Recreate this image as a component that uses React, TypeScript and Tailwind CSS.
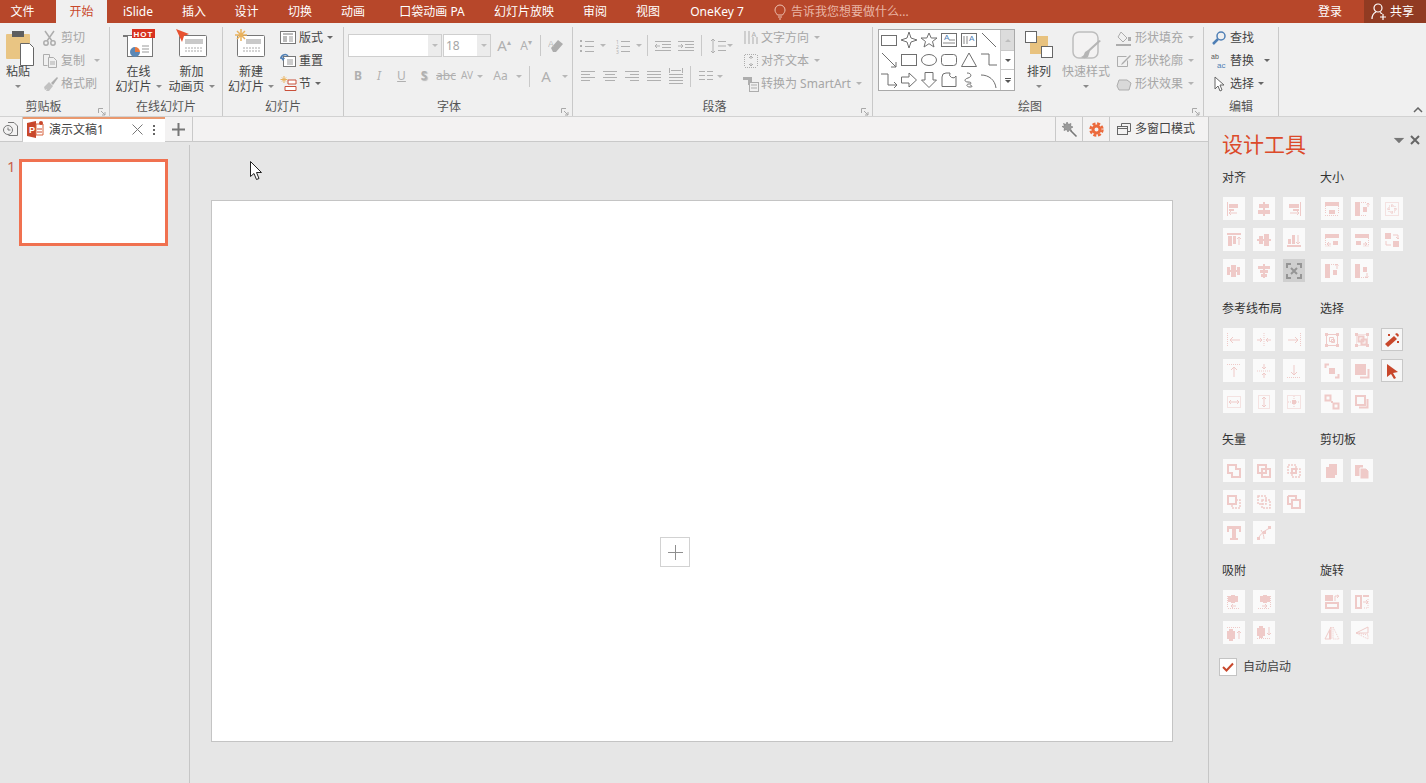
import React from "react";

const FONT = "font-['Noto_Sans','Noto_Sans_CJK_SC',sans-serif]";

const r = (x: number, y: number, w: number, h: number) => <rect x={x} y={y} width={w} height={h} fill="currentColor" />;
const l = (d: string) => <path d={d} fill="none" stroke="currentColor" strokeWidth="1" />;
const d = (p: string) => <path d={p} fill="none" stroke="currentColor" strokeWidth="1" strokeDasharray="1 1" />;
const th = (p: string) => <path d={p} fill="none" stroke="currentColor" strokeWidth="2" />;
const dt = (p: string) => <path d={p} fill="none" stroke="currentColor" strokeWidth="1.500" strokeDasharray="2 1" />;

const Caret = ({ className = "text-[#8a8a8a]" }: { className?: string }) => (
  <svg width="6" height="3" viewBox="0 0 6 3" className={`shrink-0 ${className}`}>
    <path d="M0 0h6L3 3z" fill="currentColor" />
  </svg>
);

const Launcher = () => (
  <svg width="8" height="8" viewBox="0 0 8 8" className="absolute right-[3px] bottom-0 text-[#a8a8a8]">
    <path d="M.5 5V.5H5M3 3l4 4M7 4v3H4" fill="none" stroke="currentColor" />
  </svg>
);

const Group = ({ className, label, labelClass = "", launcher, children }: { className: string; label: string; labelClass?: string; launcher?: boolean; children: React.ReactNode }) => (
  <div className={`relative flex flex-col shrink-0 border-r border-[#c9c9c9] ${className}`}>
    <div className="flex h-[70px]">{children}</div>
    <div className={`h-[15px] pt-[2px] text-center text-[12px] leading-[15px] text-[#555] ${labelClass}`}>{label}</div>
    {launcher && <Launcher />}
  </div>
);

const Big = ({ className, icon, line1, line2, caret, gray }: { className: string; icon: React.ReactNode; line1: string; line2?: string; caret?: boolean; gray?: boolean }) => (
  <div className={`flex flex-col items-center shrink-0 text-[12px] leading-[15px] ${gray ? "text-[#a6a6a6]" : "text-[#444]"} ${className}`}>
    <div className="h-[37px] flex items-start justify-center">{icon}</div>
    <div>{line1}</div>
    <div className="flex items-center justify-center gap-[4px] h-[15px]">
      {line2}
      {caret && <Caret />}
    </div>
  </div>
);

const Small = ({ icon, text, caret, gray, w = "w-[19px]", cm }: { icon: React.ReactNode; text: string; caret?: boolean; gray?: boolean; w?: string; cm?: string }) => (
  <div className={`flex items-center h-[23px] text-[12px] ${gray ? "text-[#a6a6a6]" : "text-[#444]"}`}>
    <div className={`${w} shrink-0 flex items-center`}>{icon}</div>
    <span>{text}</span>
    {caret && <Caret className={`${cm ?? (gray ? "ml-[5px]" : "ml-[4px]")} ${gray ? "text-[#b4b4b4]" : "text-[#666]"}`} />}
  </div>
);

const Ic = ({ children, w = 16, h = 16, className = "text-[#adadad]" }: { children: React.ReactNode; w?: number; h?: number; className?: string }) => (
  <svg width={w} height={h} viewBox={`0 0 ${w} ${h}`} className={`shrink-0 ${className}`}>
    {children}
  </svg>
);

const Sep = ({ h = "h-[21px]", className = "" }: { h?: string; className?: string }) => <div className={`w-px shrink-0 bg-[#c9c9c9] ${h} ${className}`} />;

const PasteIcon = () => (
  <svg width="30" height="36" viewBox="0 0 30 36" className="mt-[3px] ml-[4px]">
    <rect x="1" y="4" width="24" height="25" rx="1" fill="#e9c583" />
    <rect x="7" y="1" width="12" height="6" fill="#5e5e5e" />
    <path d="M15.500 13.500h9l4 4v18h-13z" fill="#fff" stroke="#666" />
  </svg>
);

const OnlineIcon = () => (
  <svg width="32" height="30" viewBox="0 0 32 30" className="mt-[2px]">
    <rect x="0" y="6" width="9" height="2" fill="#777" />
    <rect x="4.500" y="6.500" width="25" height="21" fill="#fff" stroke="#777" />
    <path d="M12 18a5 5 0 1 0 5 5h-5z" fill="#5b87b5" />
    <path d="M12 18v5h5a5 5 0 0 0-5-5z" fill="#ea7a3f" />
    <path d="M19 17h7M19 20h7M19 23h7" stroke="#999" />
    <rect x="9" y="0" width="23" height="9" fill="#d8321f" />
    <text x="20.500" y="7.500" fill="#fff" textAnchor="middle" fontSize="8" fontWeight="700" letterSpacing="1" fontFamily="Liberation Sans">HOT</text>
  </svg>
);

const NewAnimIcon = () => (
  <svg width="32" height="30" viewBox="0 0 32 30" className="mt-[2px]">
    <rect x="3.500" y="6.500" width="27" height="21" rx="1" fill="#fff" stroke="#777" />
    <rect x="9" y="10" width="18" height="5" fill="#c9c9c9" />
    <path d="M9 19h18M9 22h18" stroke="#aaa" strokeDasharray="2 1" />
    <path d="M0 0l13 5-5 2-2 6z" fill="#e8512f" />
  </svg>
);

const NewSlideIcon = () => (
  <svg width="32" height="30" viewBox="0 0 32 30" className="mt-[2px]">
    <rect x="2.500" y="6.500" width="27" height="21" rx="1" fill="#fff" stroke="#777" />
    <rect x="11" y="10" width="15" height="5" fill="#c9c9c9" />
    <path d="M8 19h18M8 22h18" stroke="#aaa" strokeDasharray="2 1" />
    <path d="M6 0v12M0 6h12M2 2l8 8M10 2l-8 8" stroke="#eab25c" strokeWidth="1.500" />
  </svg>
);

const ShapeCell = ({ children }: { children: React.ReactNode }) => (
  <div className="w-[20px] h-[20px] flex items-center justify-center">
    <svg width="18" height="18" viewBox="0 0 18 18" fill="none" stroke="#6f6f6f">
      {children}
    </svg>
  </div>
);

const SHAPES = [
  <rect x="1.500" y="4.500" width="15" height="10" />,
  <path d="M9 1l2 6 6 2-6 2-2 6-2-6-6-2 6-2z" />,
  <path d="M9 2l2.200 5H17l-4.500 3.500L14 16l-5-3.300L4 16l1.500-5.500L1 7h5.800z" />,
  <>
    <rect x="1.500" y="2.500" width="15" height="13" />
    <path d="M9 9h6M3 12h12" stroke="#888" />
    <text x="4" y="9" fontSize="8" fill="#4f7fb5" stroke="none" fontFamily="Liberation Sans">A</text>
  </>,
  <>
    <rect x="1.500" y="2.500" width="15" height="13" />
    <path d="M4 5v8M7 5v8" stroke="#888" />
    <text x="9" y="10" fontSize="8" fill="#4f7fb5" stroke="none" fontFamily="Liberation Sans">A</text>
  </>,
  <path d="M2 2l14 14" />,
  <path d="M2 2l14 14M11 16h5v-5" />,
  <rect x="1.500" y="3.500" width="15" height="11" />,
  <ellipse cx="9" cy="9" rx="7.500" ry="5.500" />,
  <rect x="1.500" y="3.500" width="15" height="11" rx="3" />,
  <path d="M9 2l7.500 13.500h-15z" />,
  <path d="M1 3h8v11h8" />,
  <path d="M1 3h7v11h9M14 11l3 3-3 3" />,
  <path d="M1.500 6H9V2l7.500 7L9 16v-4H1.500z" />,
  <path d="M5 1.500h8V9h3.500L9 16.500 1.500 9H5z" />,
  <path d="M2 15.500V6a4 4 0 0 1 4-4h4a3 3 0 0 0 6 3v10.500z" />,
  <path d="M7 2c5 0 5 4 1 5s-4 4 0 4 4 2 1 2-3 3 1 3 1-2 0-2" />,
  <path d="M1 4c8 0 14 5 15 13" />,
];

const ClipboardGroup = () => (
  <Group className="w-[110px]" labelClass="pr-[22px]" label="剪贴板" launcher>
    <Big className="w-[36px] ml-0" icon={<PasteIcon />} line1="粘贴" line2="" caret />
    <div className="ml-[6px] mt-[-1px] flex flex-col">
      <Small gray text="剪切" icon={<Ic><path d="M3 1l7 10M12 1L5 11" fill="none" stroke="currentColor" strokeWidth="1.500" /><circle cx="4" cy="13" r="2.200" fill="none" stroke="currentColor" strokeWidth="1.500" /><circle cx="11" cy="13" r="2.200" fill="none" stroke="currentColor" strokeWidth="1.500" /></Ic>} />
      <Small gray text="复制" caret cm="ml-[9px]" icon={<Ic><path d="M1.500 1.500h6v3M1.500 1.500v11h4" fill="none" stroke="currentColor" /><path d="M6.500 4.500h5l3 3v7h-8z" fill="none" stroke="currentColor" /><path d="M8 9h5M8 11h5" stroke="currentColor" /></Ic>} />
      <Small gray text="格式刷" icon={<Ic><path d="M9 7l6-6 1 1-5 7z" fill="currentColor" /><path d="M2 11l5-5 4 4-4 5H4l1-2-2 1z" fill="currentColor" opacity=".7" /></Ic>} />
    </div>
  </Group>
);

const OnlineGroup = () => (
  <Group className="w-[113px]" label="在线幻灯片">
    <Big className="w-[53px] ml-[2px]" icon={<OnlineIcon />} line1="在线" line2="幻灯片" caret />
    <Big className="w-[53px]" icon={<NewAnimIcon />} line1="新加" line2="动画页" caret />
  </Group>
);

const SlidesGroup = () => (
  <Group className="w-[121px]" label="幻灯片">
    <Big className="w-[56px]" icon={<NewSlideIcon />} line1="新建" line2="幻灯片" caret />
    <div className="ml-[1px] mt-[-1px] flex flex-col">
      <Small text="版式" caret icon={<Ic w={17} h={14} className="text-[#777]"><rect x=".5" y=".5" width="15" height="12" fill="#fff" stroke="currentColor" /><path d="M3 3h10" stroke="currentColor" /><rect x="3" y="5" width="4" height="6" fill="#bbb" /><path d="M9 6h4M9 8h4M9 10h4" stroke="#999" /></Ic>} />
      <Small text="重置" icon={<Ic w={17} h={15} className="text-[#777]"><rect x="3.500" y="3.500" width="12" height="10" fill="#fff" stroke="currentColor" /><path d="M7 7h6M7 9h6M7 11h6" stroke="#999" /><path d="M1 6a4 4 0 0 1 7-3" fill="none" stroke="#4f7fb5" strokeWidth="1.500" /><path d="M0 4l3 4 2-3z" fill="#4f7fb5" /></Ic>} />
      <Small text="节" caret icon={<Ic w={17} h={15} className="text-[#777]"><path d="M4 0v7M.5 3.500h7M2 1.500l4 4M6 1.500l-4 4" stroke="#eab25c" /><path d="M8 4h8v4H8zM5 10.500h11v4H5z" fill="#fff" stroke="#c9503a" /></Ic>} />
    </div>
  </Group>
);

const Glyph = ({ className, children }: { className: string; children: React.ReactNode }) => (
  <div className={`shrink-0 flex items-center justify-center text-[#b0b0b0] ${className}`}>{children}</div>
);

const FontGroup = () => (
  <Group className="w-[229px]" labelClass="pr-[18px]" label="字体" launcher>
    <div className="flex flex-col pl-[4px] pt-[7px]">
      <div className="flex items-center h-[23px]">
        <div className="w-[94px] h-[23px] bg-white border border-[#cfcfcf] flex justify-end">
          <div className="w-[13px] bg-[#ececec] flex items-center justify-center"><Caret className="text-[#bcbcbc]" /></div>
        </div>
        <div className="ml-[1px] w-[48px] h-[23px] bg-white border border-[#cfcfcf] flex items-center justify-between pl-[2px] text-[12px] text-[#a6a6a6]">
          18
          <div className="w-[13px] h-full bg-[#ececec] flex items-center justify-center"><Caret className="text-[#bcbcbc]" /></div>
        </div>
        <Glyph className="w-[24px] ml-[1px] text-[15px]">A<span className="text-[8px] -mt-2">▴</span></Glyph>
        <Glyph className="w-[20px] text-[12px]">A<span className="text-[8px] -mt-2">▾</span></Glyph>
        <Sep h="h-[21px]" className="ml-[4px]" />
        <Glyph className="w-[30px]">
          <Ic><path d="M3 10l7-8 5 4-7 8H5z" fill="currentColor" /><text x="0" y="9" fontSize="9" fill="#bdbdbd" fontFamily="Liberation Sans">A</text></Ic>
        </Glyph>
      </div>
      <div className="flex items-center h-[22px] mt-[8px] text-[12px]">
        <Glyph className="w-[20px] font-bold">B</Glyph>
        <Glyph className="w-[22px] italic">I</Glyph>
        <Glyph className="w-[23px] underline">U</Glyph>
        <Glyph className="w-[22px] font-bold [text-shadow:1px_1px_1px_#bbb]">S</Glyph>
        <Glyph className="w-[22px] line-through">abc</Glyph>
        <Glyph className="w-[20px] text-[10px] leading-[10px] -mt-[3px]">AV</Glyph>
        <Caret className="text-[#b8b8b8]" />
        <Glyph className="w-[29px] ml-[3px]">Aa</Glyph>
        <Caret className="text-[#b8b8b8] ml-[1px]" />
        <Sep className="ml-[7px]" />
        <Glyph className="w-[28px] ml-[2px] text-[15px]">A</Glyph>
        <Caret className="text-[#b8b8b8] ml-[2px]" />
      </div>
    </div>
  </Group>
);

const Lines = ({ children }: { children: React.ReactNode }) => <Ic className="text-[#b0b0b0]">{children}</Ic>;

const ParaGroup = () => (
  <Group className="w-[300px]" labelClass="pr-[16px]" label="段落" launcher>
    <div className="w-[170px] flex flex-col pl-[7px] pt-[7px]">
      <div className="flex items-center h-[23px]">
        <Lines>{r(0, 2, 2, 2)}{r(0, 7, 2, 2)}{r(0, 12, 2, 2)}{l("M5 3.500h9M5 8.500h9M5 13.500h9")}</Lines>
        <Caret className="ml-[4px] text-[#b8b8b8]" />
        <div className="ml-[10px]"><Lines><text x="0" y="6" fontSize="5" fill="currentColor">1</text><text x="0" y="11" fontSize="5" fill="currentColor">2</text><text x="0" y="16" fontSize="5" fill="currentColor">3</text>{l("M5 3.500h9M5 8.500h9M5 13.500h9")}</Lines></div>
        <Caret className="ml-[4px] text-[#b8b8b8]" />
        <Sep className="ml-[5px]" />
        <div className="ml-[6px]"><Ic w={18} className="text-[#b0b0b0]">{l("M1 3.500h16M8 6.500h9M8 9.500h9M1 12.500h16M6 8H1M3 6L1 8l2 2")}</Ic></div>
        <div className="ml-[5px]"><Ic w={18} className="text-[#b0b0b0]">{l("M1 3.500h16M8 6.500h9M8 9.500h9M1 12.500h16M1 8h5M4 6l2 2-2 2")}</Ic></div>
        <Sep className="ml-[6px]" />
        <div className="ml-[7px]"><Ic w={18} className="text-[#b0b0b0]">{l("M4 1v14M2 3l2-2 2 2M2 13l2 2 2-2M9 3.500h8M9 8h8M9 12.500h8")}</Ic></div>
        <Caret className="ml-[0px] text-[#b8b8b8]" />
      </div>
      <div className="flex items-center h-[22px] mt-[8px] gap-[6px]">
        <Ic className="text-[#b0b0b0]">{l("M1 3.500h14M1 6.500h9M1 9.500h14M1 12.500h9")}</Ic>
        <Ic className="text-[#b0b0b0]">{l("M1 3.500h14M3 6.500h10M1 9.500h14M3 12.500h10")}</Ic>
        <Ic className="text-[#b0b0b0]">{l("M1 3.500h14M6 6.500h9M1 9.500h14M6 12.500h9")}</Ic>
        <Ic className="text-[#b0b0b0]">{l("M1 3.500h14M1 6.500h14M1 9.500h14M1 12.500h14")}</Ic>
        <Ic className="text-[#b0b0b0]">{l("M1.500 0v5M14.500 0v5M3 2.500h10M1 6.500h14M1 9.500h14M1 12.500h14M1 15.500h14")}</Ic>
        <Sep />
        <div className="ml-[1px]"><Ic className="text-[#b0b0b0]">{l("M1 3.500h6M9 3.500h6M1 7.500h6M9 7.500h6M1 11.500h6M9 11.500h6")}</Ic></div>
        <Caret className="ml-[-3px] text-[#b8b8b8]" />
      </div>
    </div>
    <div className="mt-[-1px] flex flex-col">
      <Small gray w="w-[18px]" text="文字方向" caret icon={<Ic>{l("M2 1v13M6 1v13M10 7v7M14 7v7")}<text x="8.500" y="7" fontSize="7" fill="currentColor" fontFamily="Liberation Sans">A</text></Ic>} />
      <Small gray w="w-[18px]" text="对齐文本" caret icon={<Ic>{d("M1.500 2v12M14.500 2v12M2 1.500h12M2 14.500h12")}{l("M8 3v3M6 5l2-2 2 2M8 13v-3M6 11l2 2 2-2")}</Ic>} />
      <Small gray w="w-[18px]" text="转换为 SmartArt" caret icon={<Ic>{r(0, 1, 9, 3)}{r(5, 4, 4, 5)}<rect x="6.500" y="6.500" width="9" height="9" fill="#f0f0f0" stroke="currentColor" />{l("M8 9h6M8 12h6")}</Ic>} />
    </div>
  </Group>
);

const DrawGroup = () => (
  <Group className="w-[331px]" labelClass="pr-[16px]" label="绘图" launcher>
    <div className="ml-[5px] mt-[2px] w-[137px] h-[62px] bg-white border border-[#a9a9a9] flex shrink-0">
      <div className="w-[121px] grid grid-cols-[repeat(6,20px)] grid-rows-[repeat(3,20px)] content-center">
        {SHAPES.map((s, i) => (
          <ShapeCell key={i}>{s}</ShapeCell>
        ))}
      </div>
      <div className="w-[14px] flex flex-col border-l border-[#c9c9c9]">
        <div className="h-[20px] bg-[#dcdcdc] flex items-center justify-center"><Caret className="rotate-180 text-[#bdbdbd]" /></div>
        <div className="h-[20px] border-y border-[#c9c9c9] flex items-center justify-center"><Caret className="text-[#555]" /></div>
        <div className="flex-1 flex flex-col items-center justify-center gap-[1px]"><div className="w-[6px] h-px bg-[#555]" /><Caret className="text-[#555]" /></div>
      </div>
    </div>
    <Big
      className="w-[46px] ml-[1px]"
      icon={
        <svg width="28" height="28" viewBox="0 0 28 28" className="mt-[4px]">
          <rect x="5" y="5" width="18" height="18" fill="#e8c27e" />
          <rect x=".5" y=".5" width="11" height="11" fill="#fff" stroke="#666" />
          <rect x="16.500" y="15.500" width="11" height="11" fill="#fff" stroke="#666" />
        </svg>
      }
      line1="排列"
      line2=""
      caret
    />
    <Big
      gray
      className="w-[50px] ml-[-1px]"
      icon={
        <svg width="32" height="30" viewBox="0 0 32 30" className="mt-[4px] ml-[2px]">
          <rect x="2" y="1" width="25" height="26" rx="6" fill="#f3f2f2" stroke="#bdbdbd" strokeWidth="1.500" />
          <path d="M30 10L19 20l-2 6c-3 2-6 1-7 0 3-1 3-3 4-5l3-2 11-10z" fill="#b5b5b5" />
        </svg>
      }
      line1="快速样式"
      line2=""
      caret
    />
    <div className="ml-[5px] mt-[-1px] flex flex-col">
      <Small gray text="形状填充" caret icon={<Ic>{l("M5 2l6 6-4 4-5-5z")}{r(0, 14, 15, 2)}{r(12, 7, 3, 4)}</Ic>} />
      <Small gray text="形状轮廓" caret icon={<Ic>{l("M1.500 3.500h9M1.500 3.500v10h10v-6")}<path d="M6 10l8-8 1 1-8 8-2 1z" fill="currentColor" /></Ic>} />
      <Small gray text="形状效果" caret icon={<Ic><path d="M3 4h8l4 3-2 7H3l-2-4z" fill="#d9d9d9" stroke="currentColor" /></Ic>} />
    </div>
  </Group>
);

const EditGroup = () => (
  <Group className="w-[75px]" label="编辑">
    <div className="ml-[7px] mt-[-1px] flex flex-col">
      <Small text="查找" icon={<Ic className="text-[#4f7fb5]"><circle cx="10" cy="6" r="4" fill="none" stroke="currentColor" strokeWidth="1.500" /><path d="M7 9l-5 5" stroke="currentColor" strokeWidth="2.500" /></Ic>} />
      <Small text="替换" caret cm="ml-[10px]" icon={<Ic><text x="0" y="6" fontSize="7" fill="#555" fontFamily="Liberation Sans">ab</text><text x="6" y="15" fontSize="8" fill="#4f7fb5" fontFamily="Liberation Sans">ac</text></Ic>} />
      <Small text="选择" caret icon={<Ic><path d="M4 1v12l3-3 2 5 2-1-2-5h4z" fill="#fff" stroke="#666" /></Ic>} />
    </div>
  </Group>
);

const Ribbon = () => (
  <div className="relative h-[94px] shrink-0 bg-[#f0f0f0] border-b border-[#d2d2d2] flex pt-[4px]">
    <ClipboardGroup />
    <OnlineGroup />
    <SlidesGroup />
    <FontGroup />
    <ParaGroup />
    <DrawGroup />
    <EditGroup />
    <svg width="10" height="6" viewBox="0 0 10 6" className="absolute right-[3px] bottom-[3px] text-[#666]">
      <path d="M1 5l4-4 4 4" fill="none" stroke="currentColor" strokeWidth="1.500" />
    </svg>
  </div>
);

const MENU = [
  { t: "文件", c: "w-[45px] mr-[11px]" },
  { t: "开始", c: "w-[51px] bg-[#f0f0f0] !text-[#c9482b]" },
  { t: "iSlide", c: "w-[62px]" },
  { t: "插入", c: "w-[50px]" },
  { t: "设计", c: "w-[55px]" },
  { t: "切换", c: "w-[52px]" },
  { t: "动画", c: "w-[54px]" },
  { t: "口袋动画 PA", c: "w-[104px]" },
  { t: "幻灯片放映", c: "w-[80px]" },
  { t: "审阅", c: "w-[62px]" },
  { t: "视图", c: "w-[44px]" },
  { t: "OneKey 7", c: "w-[94px]" },
];

const TitleBar = () => (
  <div className="h-[23px] shrink-0 bg-[#b7472a] flex items-center text-[12px] text-white">
    {MENU.map((m) => (
      <div key={m.t} className={`h-full flex items-center justify-center whitespace-nowrap ${m.c}`}>
        {m.t}
      </div>
    ))}
    <svg width="12" height="16" viewBox="0 0 12 16" className="ml-[10px] text-[#eec3b4]">
      <path d="M3.500 11C2 9 1 8 1 6a5 5 0 0 1 10 0c0 2-1 3-2.500 5zM4 13h4M5 15h2" fill="none" stroke="currentColor" />
    </svg>
    <span className="ml-[5px] text-[#e9b5a5]">告诉我您想要做什么...</span>
    <span className="ml-auto mr-[22px]">登录</span>
    <div className="w-[62px] h-full bg-[#913b22] flex items-center pl-[7px] gap-[3px]">
      <svg width="16" height="17" viewBox="0 0 16 17" fill="none" stroke="#fff" strokeWidth="1.200">
        <circle cx="7" cy="5" r="4" />
        <path d="M1 16c0-4 2-6 4-7M9 9.500c1 .5 2 1 2 1.500M9 14h6M12 11v6" />
      </svg>
      共享
    </div>
  </div>
);

const TabBar = () => (
  <div className="h-[25px] shrink-0 bg-[#f3f2f2] border-b border-[#c9c9c9] flex text-[12px] text-[#444]">
    <div className="w-[23px] flex items-center justify-center border-r border-[#c9c9c9]">
      <svg width="16" height="16" viewBox="0 0 16 16" fill="none" stroke="#777">
        <path d="M5 1.500h6l3.500 3.500v9.500h-9" />
        <circle cx="5" cy="9" r="4.500" fill="#f3f2f2" />
        <path d="M5 6.500V9h2.500" />
      </svg>
    </div>
    <div className="w-[142px] h-[25px] bg-white border-t-2 border-[#e9996f] flex items-center pl-[4px] pb-[2px]">
      <svg width="17" height="17" viewBox="0 0 17 17">
        <path d="M0 2l9-2v17l-9-2z" fill="#c8472b" />
        <path d="M9 3h7v11H9z" fill="#fff" stroke="#d9653f" />
        <circle cx="14" cy="2" r="2" fill="#c8472b" />
        <path d="M10 11h5M10 8h5" stroke="#c8472b" />
        <text x="2" y="12" fontSize="9" fontWeight="700" fill="#fff" fontFamily="Liberation Sans">P</text>
      </svg>
      <span className="ml-[5px]">演示文稿1</span>
      <svg width="11" height="11" viewBox="0 0 11 11" className="ml-[28px] text-[#777]">
        <path d="M.5.5l10 10M10.500.5l-10 10" stroke="currentColor" />
      </svg>
      <div className="ml-[10px] text-[#666] flex flex-col gap-[2px]">
        <div className="w-[2px] h-[2px] bg-current" />
        <div className="w-[2px] h-[2px] bg-current" />
        <div className="w-[2px] h-[2px] bg-current" />
      </div>
    </div>
    <div className="w-[28px] flex items-center justify-center border-r border-[#c9c9c9]">
      <svg width="13" height="13" viewBox="0 0 13 13"><path d="M6.500 0v13M0 6.500h13" stroke="#777" strokeWidth="2" /></svg>
    </div>
    <div className="flex-1 flex justify-end">
      <div className="w-[27px] flex items-center justify-center border-l border-[#c9c9c9]">
        <svg width="17" height="17" viewBox="0 0 17 17">
          <path d="M6 1l1.500 2.500L10 2.500l-.5 2.500 2.500 1-2.500 1.500 1 2.500-2.500-1L7 11 5.500 8.500 3 9.500 3.500 7 1 5.500 3.500 5 2.500 2.500 5 3.500z" fill="#9a9a9a" stroke="#777" strokeWidth=".6" />
          <path d="M9.500 9.500l6 6" stroke="#777" strokeWidth="1.600" />
        </svg>
      </div>
      <div className="w-[27px] flex items-center justify-center border-l border-[#c9c9c9]">
        <svg width="15" height="15" viewBox="0 0 15 15" fill="none" stroke="#ec6a3c">
          <circle cx="7.500" cy="7.500" r="3.500" strokeWidth="3" />
          <circle cx="7.500" cy="7.500" r="6" strokeWidth="2.400" strokeDasharray="3 1.700" />
        </svg>
      </div>
      <div className="w-[99px] flex items-center border-l border-[#c9c9c9] pl-[7px]">
        <svg width="14" height="13" viewBox="0 0 14 13" fill="none" stroke="#666">
          <path d="M4.500 3.500v-3h9v8h-3" />
          <rect x=".5" y="3.500" width="10" height="8" fill="#f3f2f2" />
          <path d="M1 5.500h9" />
        </svg>
        <span className="ml-[4px]">多窗口模式</span>
      </div>
    </div>
  </div>
);

const Tile = ({ children, state }: { children?: React.ReactNode; state?: "gray" | "on" }) => {
  const cls =
    state === "gray"
      ? "bg-[#cfcfcf] text-[#959595]"
      : state === "on"
        ? "bg-[#f6f6f6] border border-[#c8c8c8] text-[#c8472b]"
        : "bg-[#fafafa] text-[#efcac8]";
  return (
    <div className={`w-[22px] h-[23px] flex items-center justify-center ${cls}`}>
      <svg width="16" height="16" viewBox="0 0 16 16">{children}</svg>
    </div>
  );
};

const ToolCol = ({ title, tiles, two }: { title: string; tiles: React.ReactNode[]; two?: boolean }) => (
  <div className="w-[98px]">
    <div className="h-[20px] leading-[22px] text-[12px] text-[#333] mb-[10px]">{title}</div>
    <div className={`grid gap-x-[8px] gap-y-[8px] pl-px ${two ? "grid-cols-[22px_22px]" : "grid-cols-[22px_22px_22px]"}`}>
      {tiles.map((t, i) => (
        <React.Fragment key={i}>{t}</React.Fragment>
      ))}
    </div>
  </div>
);

const ALIGN = [
  <Tile>{r(1, 1, 1, 14)}{r(3, 3, 9, 4)}{r(3, 8, 5, 2)}{l("M11 12H3M5 10l-2 2 2 2")}</Tile>,
  <Tile>{r(7, 1, 2, 14)}{r(3, 3, 10, 4)}{r(2, 9, 12, 4)}</Tile>,
  <Tile>{r(14, 1, 1, 14)}{r(3, 3, 10, 4)}{r(7, 8, 6, 2)}{l("M4 12h9M11 10l2 2-2 2")}</Tile>,
  <Tile>{r(1, 1, 14, 2)}{r(2, 4, 4, 10)}{r(7, 4, 3, 8)}{l("M13 13V5M11 7l2-2 2 2")}</Tile>,
  <Tile>{r(1, 7, 14, 2)}{r(3, 4, 4, 8)}{r(8, 2, 5, 12)}</Tile>,
  <Tile>{r(1, 13, 14, 2)}{r(2, 7, 3, 5)}{r(6, 3, 3, 9)}{l("M12 3v9M10 10l2 2 2-2")}</Tile>,
  <Tile>{r(1, 4, 3, 8)}{r(5, 2, 5, 12)}{r(11, 4, 3, 8)}{r(4, 7, 9, 2)}</Tile>,
  <Tile>{r(7, 1, 2, 14)}{r(2, 3, 12, 3)}{r(4, 7, 8, 3)}{r(5, 11, 6, 3)}</Tile>,
  <Tile state="gray">{th("M5 5l6 6M11 5l-6 6")}{r(0, 0, 5, 2)}{r(0, 0, 2, 5)}{r(11, 0, 5, 2)}{r(14, 0, 2, 5)}{r(0, 14, 5, 2)}{r(0, 11, 2, 5)}{r(11, 14, 5, 2)}{r(14, 11, 2, 5)}</Tile>,
];

const SIZE = [
  <Tile>{r(1, 1, 14, 4)}{d("M1.500 5v8M14.500 5v8")}{r(5, 9, 6, 4)}{d("M1 14.500h14")}</Tile>,
  <Tile>{r(1, 1, 5, 14)}{d("M7 1.500h6M7 14.500h6")}{r(9, 6, 4, 5)}{l("M14 2v4M12.500 3.500L14 2l1.500 1.500")}</Tile>,
  <Tile>{d("M1.500 1.500h13v13h-13z")}{d("M5 5h6v6H5z")}{l("M8 3v3M8 10v3M3 8h3M10 8h3")}</Tile>,
  <Tile>{r(1, 2, 14, 4)}{d("M1.500 6v8h5")}{r(9, 9, 5, 4)}{l("M7 12H3M5 10l-2 2 2 2")}</Tile>,
  <Tile>{r(1, 2, 14, 4)}{d("M14.500 6v8h-5")}{r(2, 9, 5, 4)}{l("M9 12h4M11 10l2 2-2 2")}</Tile>,
  <Tile>{r(1, 1, 6, 6)}{r(9, 9, 6, 6)}{l("M9 3h5v4M12 5l2 2 1-1M7 13H2V9")}</Tile>,
  <Tile>{r(1, 1, 5, 14)}{d("M7 1.500h5")}{r(9, 7, 4, 5)}{l("M13 6V1M11.500 2.500L13 1l1.500 1.500")}</Tile>,
  <Tile>{r(1, 1, 5, 14)}{d("M7 14.500h5")}{r(9, 4, 4, 5)}{l("M13 10v5M11.500 13.500L13 15l1.500-1.500")}</Tile>,
];

const GUIDES = [
  <Tile>{d("M1.500 1v14")}{l("M14 8H4M7 5L4 8l3 3")}</Tile>,
  <Tile>{d("M8 1v14")}{l("M1 8h5M4 6l2 2-2 2M15 8h-5M12 6l-2 2 2 2")}</Tile>,
  <Tile>{d("M14.500 1v14")}{l("M2 8h10M9 5l3 3-3 3")}</Tile>,
  <Tile>{d("M1 1.500h14")}{l("M8 14V4M5 7l3-3 3 3")}</Tile>,
  <Tile>{d("M1 8h14")}{l("M8 1v5M6 4l2 2 2-2M8 15v-5M6 12l2-2 2 2")}</Tile>,
  <Tile>{d("M1 14.500h14")}{l("M8 2v10M5 9l3 3 3-3")}</Tile>,
  <Tile>{d("M1.500 2.500h13v11h-13z")}{l("M3 8h10M5 6L3 8l2 2M11 6l2 2-2 2")}</Tile>,
  <Tile>{d("M2.500 1.500h11v13h-11z")}{l("M8 3v10M6 5l2-2 2 2M6 11l2 2 2-2")}</Tile>,
  <Tile>{d("M1.500 1.500h13v13h-13z")}{d("M2 8h12M8 2v12")}{r(6, 6, 4, 4)}</Tile>,
];

const SELECT = [
  <Tile>{l("M2.500 2.500h11v11h-11z")}{l("M5.500 5.500h4v4h-4zM7.500 7.500h3v3h-3z")}{r(1, 1, 3, 3)}{r(12, 1, 3, 3)}{r(1, 12, 3, 3)}{r(12, 12, 3, 3)}</Tile>,
  <Tile>{d("M2.500 2.500h11v11h-11z")}{th("M4.500 4.500h5v5h-5zM7.500 7.500h5v5h-5z")}{r(1, 1, 3, 3)}{r(12, 1, 3, 3)}{r(1, 12, 3, 3)}{r(12, 12, 3, 3)}</Tile>,
  <Tile state="on"><path d="M1 12l9-8 3 3-9 8z" fill="currentColor" /><path d="M11 2l2-1 2 2-1 2z" fill="currentColor" />{r(4, 2, 2, 2)}{r(13, 9, 2, 2)}</Tile>,
  <Tile>{th("M1.500 5V1.500H5M14.500 11v3.500H11")}{r(5, 5, 6, 6)}</Tile>,
  <Tile>{r(1, 1, 11, 11)}{th("M14.500 6v8.500H6")}</Tile>,
  <Tile state="on"><path d="M3 1l11 8-5 1 3 5-2 1-3-5-4 3z" fill="currentColor" /></Tile>,
  <Tile>{th("M1.500 1.500h5v5h-5zM9.500 9.500h5v5h-5z")}{r(7, 7, 2, 2)}</Tile>,
  <Tile>{th("M2 2h9v9H2zM13.500 5v8.500H5")}</Tile>,
];

const VECTOR = [
  <Tile>{th("M2 2h8v4h4v8H6v-4H2z")}</Tile>,
  <Tile>{th("M2 2h8v8H2zM6 6h8v8H6z")}</Tile>,
  <Tile>{dt("M2 2h8v4h4v8H6v-4H2z")}{th("M6 6h4v4H6z")}</Tile>,
  <Tile>{th("M2 2h8v8H2z")}{dt("M10 6h4v8H6v-4")}</Tile>,
  <Tile>{dt("M2 2h8v8H2zM6 6h8v8H6z")}</Tile>,
  <Tile>{th("M2 2h8v4M6 6h8v8H6zM2 2v8h4")}</Tile>,
  <Tile>{r(1, 1, 14, 3)}{r(1, 1, 2, 6)}{r(13, 1, 2, 6)}{r(6, 1, 4, 13)}{r(4, 13, 8, 2)}</Tile>,
  <Tile>{l("M2 14C5 8 8 6 14 3M5 5c2 3 3 6 3 9")}{r(1, 12, 3, 3)}{r(7, 6, 3, 3)}{r(12, 1, 3, 3)}</Tile>,
];

const CLIP = [
  <Tile>{r(5, 1, 8, 11)}{r(2, 4, 9, 11)}</Tile>,
  <Tile>{r(1, 2, 8, 11)}<path d="M6 5h6l3 3v8H6z" fill="currentColor" stroke="#fafafa" /></Tile>,
];

const SNAP = [
  <Tile>{r(2, 2, 10, 6)}{r(5, 1, 4, 8)}{d("M1.500 2v12M2 14.500h12")}{l("M10 12H5M7 10l-2 2 2 2")}</Tile>,
  <Tile>{r(4, 2, 10, 6)}{r(7, 1, 4, 8)}{d("M14.500 2v12M2 14.500h12")}{l("M6 12h5M9 10l2 2-2 2")}</Tile>,
  <Tile>{r(1, 6, 8, 8)}{r(3, 4, 4, 12)}{d("M1 2.500h14")}{l("M13 14V6M11 8l2-2 2 2")}</Tile>,
  <Tile>{r(1, 3, 8, 8)}{r(3, 1, 4, 12)}{d("M1 13.500h14")}{l("M13 2v8M11 8l2 2 2-2")}</Tile>,
];

const ROTATE = [
  <Tile>{th("M2 9h12v5H2z")}{r(1, 1, 8, 6)}{l("M11 7V2h3M13 1l2 1-2 2")}</Tile>,
  <Tile>{th("M2 2h5v12H2z")}{r(9, 1, 6, 2)}{d("M14 5v9h-5")}{l("M9 8h5M12 6l2 2-2 2")}</Tile>,
  <Tile>{l("M7 2L1 14h6z")}{d("M9 2l6 12H9z")}{r(5, 5, 2, 9)}</Tile>,
  <Tile>{l("M14 2L2 8h12z")}{d("M14 10L2 8l12 6z")}</Tile>,
];

const DesignPanel = () => (
  <div className="w-[218px] shrink-0 bg-[#e6e6e6] border-l border-[#c6c6c6] pl-[13px] text-[12px]">
    <div className="flex items-start justify-between h-[42px] pt-[13px] pr-[6px]">
      <div className="text-[21px] leading-[28px] text-[#dc4a2a]">设计工具</div>
      <div className="flex items-center gap-[8px] pt-[5px]">
        <Caret className="scale-[1.8] text-[#777]" />
        <svg width="10" height="10" viewBox="0 0 10 10"><path d="M1 1l8 8M9 1l-8 8" stroke="#666" strokeWidth="2" /></svg>
      </div>
    </div>
    <div className="flex mt-[8px]">
      <ToolCol title="对齐" tiles={ALIGN} />
      <ToolCol title="大小" tiles={SIZE} />
    </div>
    <div className="flex mt-[16px]">
      <ToolCol title="参考线布局" tiles={GUIDES} />
      <ToolCol title="选择" tiles={SELECT} />
    </div>
    <div className="flex mt-[16px]">
      <ToolCol title="矢量" tiles={VECTOR} />
      <ToolCol title="剪切板" tiles={CLIP} />
    </div>
    <div className="flex mt-[16px]">
      <ToolCol title="吸附" tiles={SNAP} two />
      <ToolCol title="旋转" tiles={ROTATE} two />
    </div>
    <div className="flex items-center mt-[14px] ml-[-3px]">
      <div className="w-[18px] h-[18px] bg-white border border-[#c4c4c4] flex items-center justify-center">
        <svg width="12" height="10" viewBox="0 0 12 10"><path d="M1 5l3.500 3.500L11 1.500" fill="none" stroke="#c8472b" strokeWidth="2" /></svg>
      </div>
      <span className="ml-[6px] text-[#444]">自动启动</span>
    </div>
  </div>
);

const App = () => (
  <div className={`relative w-[1426px] h-[783px] overflow-hidden flex flex-col bg-[#e6e6e6] ${FONT}`}>
    <TitleBar />
    <Ribbon />
    <div className="flex flex-1 min-h-0">
      <div className="flex-1 min-w-0 flex flex-col">
        <TabBar />
        <div className="flex flex-1 min-h-0">
          <div className="w-[190px] shrink-0 mt-[3px] border-r border-[#c6c6c6] flex items-start pt-[14px]">
            <span className="w-[19px] pl-[7px] leading-[14px] text-[15px] text-[#c9614a]">1</span>
            <div className="w-[149px] h-[87px] bg-white border-[3px] border-[#f07150]" />
          </div>
          <div className="flex-1 pl-[21px] pt-[58px]">
            <div className="relative w-[962px] h-[542px] bg-white border border-[#c4c4c4]">
              <div className="absolute left-[448px] top-[336px] w-[30px] h-[30px] bg-white border border-[#d2d2d2] flex items-center justify-center">
                <svg width="15" height="15" viewBox="0 0 15 15"><path d="M7.500 0v15M0 7.500h15" stroke="#8f8f8f" /></svg>
              </div>
            </div>
          </div>
        </div>
      </div>
      <DesignPanel />
    </div>
    <svg width="14" height="20" viewBox="0 0 14 20" className="absolute left-[250px] top-[161px]">
      <path d="M.5.500v15l3.500-3 2.500 6 2.500-1-2.500-6h5z" fill="#fff" stroke="#222" />
    </svg>
  </div>
);

export default App;
